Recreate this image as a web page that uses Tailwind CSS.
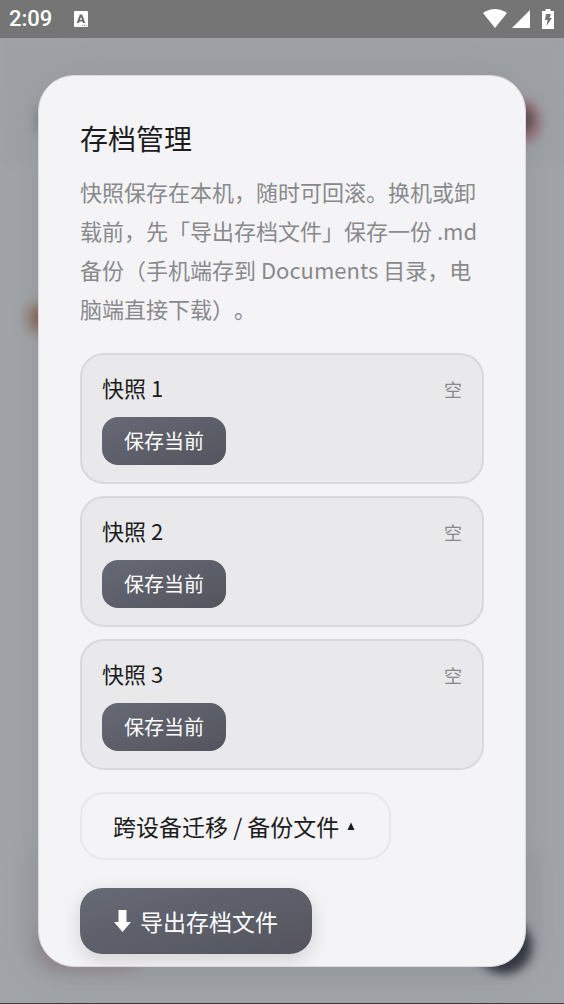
<!DOCTYPE html>
<html lang="zh-CN">
<head>
<meta charset="utf-8">
<meta name="viewport" content="width=device-width, initial-scale=1">
<title>存档管理</title>
<script src="https://cdn.jsdelivr.net/npm/@tailwindcss/browser@4"></script>
</head>
<body class="flex min-h-screen flex-col bg-[#a1a5a9] font-['Noto_Sans_CJK_SC',sans-serif] text-[#1c1c1e]">
  <header class="z-10 flex h-[38px] items-center bg-[#757575] pr-[10px] pl-[9px] text-white">
    <time class="font-['Roboto',sans-serif] text-[22px] leading-none font-medium">2:09</time>
    <svg class="ml-[21px] h-4 w-4" viewBox="0 0 16 16" aria-hidden="true">
      <rect x="1" width="14" height="16" rx="1" fill="#fff"/>
      <path d="M3.800 12 6.800 3.500h2.400L12.200 12h-2.200l-.5-1.600H6.500L6 12zM7 8.900h2L8 5.800z" fill="#6a6a6a"/>
      <path d="M9 14.300h5" stroke="#999" stroke-dasharray="1.4 .5"/>
    </svg>
    <div class="ml-auto flex items-center">
      <svg class="h-5 w-6" viewBox="0 0 24 20" fill="#fff" aria-hidden="true"><path d="M0 4Q12-4 24 4L12 19z"/></svg>
      <svg class="ml-[5px] h-[18px] w-[18px]" viewBox="0 0 18 18" fill="#fff" aria-hidden="true"><path d="M18 0v18H0z"/></svg>
      <svg class="ml-3 h-5 w-3" viewBox="0 0 12 20" aria-hidden="true"><path d="M3.500 0h5v2H12v18H0V2h3.500z" fill="#fff"/><path d="M4 5h5L7.500 9H10l-5.500 8 1-6H3z" fill="#757575"/></svg>
    </div>
  </header>

  <main class="relative flex-1 overflow-hidden border-b-2 border-[#3c3934] px-[38px] pt-[37px] pb-9">
    <!-- dimmed, blurred page behind the dialog -->
    <div class="absolute inset-0" aria-hidden="true">
      <div class="absolute inset-x-0 top-0 h-32 bg-[#9da1a5] blur-[3px]"></div>
      <div class="absolute inset-x-8 top-8 bottom-5 rounded-[48px] bg-[#96999e] blur-[14px]"></div>
      <div class="absolute inset-x-6 bottom-8 h-32 rounded-[28px] bg-[#96999e] blur-[8px]"></div>
      <div class="absolute top-[70px] left-[36px] h-6 w-4 bg-[#7d8186] blur-[5px]"></div>
      <div class="absolute top-[62px] right-[23px] h-11 w-10 rounded-full bg-[#93747d] blur-[5px]"></div>
      <div class="absolute top-[68px] right-[31px] h-7 w-9 rounded-full bg-[#5c4c48] blur-[5px]"></div>
      <div class="absolute top-[266px] left-7 h-7 w-8 rounded-full bg-[#84614f] blur-[7px]"></div>
      <div class="absolute bottom-8 left-9 h-14 w-28 rounded-full bg-[#90868b] blur-[6px]"></div>
      <div class="absolute right-8 bottom-[29px] h-14 w-14 rounded-full bg-[#333842] blur-[5px]"></div>
    </div>

    <section role="dialog" aria-modal="true" aria-labelledby="title" class="relative overflow-hidden rounded-[36px] border border-[#d9dade] bg-[#f4f4f7] px-[41px] pt-[42px] pb-3">
      <h1 id="title" class="text-[28px] leading-[40px]">存档管理</h1>
      <p class="mt-[14px] text-[22px] leading-[39px] text-[#89898b] [text-spacing-trim:space-all]">快照保存在本机，随时可回滚。换机或卸载前，先「导出存档文件」保存一份 .md 备份（手机端存到 Documents 目录，电脑端直接下载）。</p>

      <ul class="mt-[25px] flex flex-col gap-3">
        <li class="rounded-[24px] border-2 border-[#d9d9db] bg-[#e9e9eb] px-5 pt-4 pb-[17px]">
          <div class="flex items-end justify-between"><h2 class="text-[22px] leading-8">快照 1</h2><span class="text-[18px] leading-7 text-[#89898b]">空</span></div>
          <button type="button" class="mt-[14px] block h-12 rounded-[16px] bg-linear-to-br from-[#666a75] to-[#53545e] px-[22px] text-[20px] leading-7 text-white">保存当前</button>
        </li>
        <li class="rounded-[24px] border-2 border-[#d9d9db] bg-[#e9e9eb] px-5 pt-4 pb-[17px]">
          <div class="flex items-end justify-between"><h2 class="text-[22px] leading-8">快照 2</h2><span class="text-[18px] leading-7 text-[#89898b]">空</span></div>
          <button type="button" class="mt-[14px] block h-12 rounded-[16px] bg-linear-to-br from-[#666a75] to-[#53545e] px-[22px] text-[20px] leading-7 text-white">保存当前</button>
        </li>
        <li class="rounded-[24px] border-2 border-[#d9d9db] bg-[#e9e9eb] px-5 pt-4 pb-[17px]">
          <div class="flex items-end justify-between"><h2 class="text-[22px] leading-8">快照 3</h2><span class="text-[18px] leading-7 text-[#89898b]">空</span></div>
          <button type="button" class="mt-[14px] block h-12 rounded-[16px] bg-linear-to-br from-[#666a75] to-[#53545e] px-[22px] text-[20px] leading-7 text-white">保存当前</button>
        </li>
      </ul>

      <button type="button" aria-expanded="true" class="mt-[22px] flex h-[68px] items-center gap-2 rounded-[24px] border-2 border-[#e8e8eb] pr-[34px] pl-[31px] text-[23px] leading-8">跨设备迁移 / 备份文件
        <svg class="h-2 w-2" viewBox="0 0 8 8" fill="currentColor" aria-hidden="true"><path d="M4 0.500 7.500 8H.5z"/></svg>
      </button>
      <button type="button" class="mt-7 flex h-[66px] items-center gap-[9px] rounded-[22px] bg-linear-to-br from-[#666a75] to-[#53545e] px-[34px] text-[23px] leading-8 text-white shadow-[0_6px_20px_#00000024]">
        <svg class="h-[22px] w-[17px]" viewBox="0 0 17 22" fill="currentColor" aria-hidden="true"><path d="M4.500 0h8v12H17l-8.500 10L0 12h4.500z"/></svg>导出存档文件</button>
    </section>
  </main>
</body>
</html>
